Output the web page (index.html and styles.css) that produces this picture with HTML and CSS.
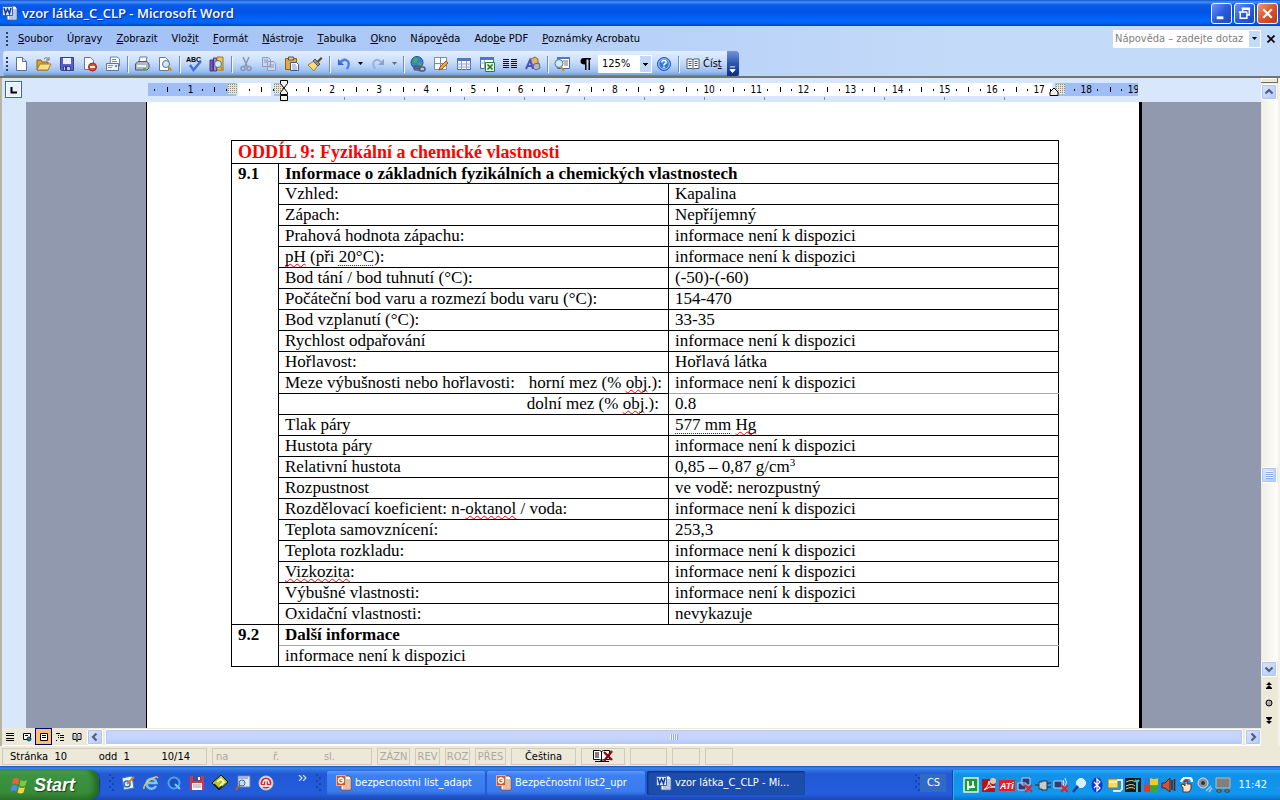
FILE: index.html
```html
<!DOCTYPE html>
<html lang="cs">
<head>
<meta charset="utf-8">
<title>vzor látka_C_CLP - Microsoft Word</title>
<link rel="stylesheet" href="styles.css">
</head>
<body>
<svg class="defs" aria-hidden="true">
  <symbol id="word" viewBox="0 0 16 16"><path d="M5 1h8l2 2v12H5z" fill="#fff" stroke="#3c5a9c"/><path d="M10 5h4M10 7h4M10 9h4M7 11h7M7 13h7" stroke="#6f8fd0"/><path d="M.5 1.500h10v9h-10z" fill="#dce8fc" stroke="#3a62b4"/><path d="M2 3l1.500 5.500L5.500 4l2 4.500L9 3" fill="none" stroke="#123c9c" stroke-width="1.500"/></symbol>
  <symbol id="ppt" viewBox="0 0 16 16"><path d="M5 1h8l2 2v12H5z" fill="#fff" stroke="#8c4a34"/><path d="M10 5h4M10 7h4M10 9h4M7 11h7M7 13h7" stroke="#d07850"/><path d="M.5 .5h9v10h-9z" fill="#d4532a" stroke="#f0b090"/><circle cx="5" cy="5.500" r="2.500" fill="#d4532a" stroke="#fff" stroke-width="1.400"/><path d="M5 2v3.500h3" fill="none" stroke="#fff"/></symbol>
  <symbol id="lens" viewBox="0 0 16 16"><circle cx="9" cy="8" r="3.500" fill="#cfeaf8" stroke="#5d6f80"/><path d="M11.500 11l3 3.500" stroke="#d08a20" stroke-width="2"/></symbol>
  <symbol id="down" viewBox="0 0 5 3"><path d="M0 0h5L2.500 3z"/></symbol>
  <symbol id="grip" viewBox="0 0 6 24"><path d="M1 3h2v2H1zM4 6h2v2H4zM1 9h2v2H1zM4 12h2v2H4zM1 15h2v2H1zM4 18h2v2H4z" fill="#1645a8"/></symbol>
</svg>

<header class="titlebar">
  <svg class="ico"><use href="#word"/></svg>
  <h1>vzor látka_C_CLP - Microsoft Word</h1>
  <div class="winbtns">
    <button aria-label="Minimalizovat"><svg viewBox="0 0 20 20"><path d="M5 13h7v3H5z" fill="#fff"/></svg></button>
    <button aria-label="Obnovit"><svg viewBox="0 0 20 20"><path d="M8 8V5.500h7v6h-2.500M7 4.500h9M4 8.500h9M5.500 9v6h7V9" fill="none" stroke="#fff" stroke-width="1.500"/></svg></button>
    <button class="close" aria-label="Zavřít"><svg viewBox="0 0 20 20"><path d="M5.500 5.500l9 9M14.500 5.500l-9 9" stroke="#fff" stroke-width="2.400"/></svg></button>
  </div>
</header>

<nav class="menubar">
  <i class="dots"></i>
  <button><u>S</u>oubor</button><button>Úpr<u>a</u>vy</button><button><u>Z</u>obrazit</button><button>Vlož<u>i</u>t</button><button><u>F</u>ormát</button><button><u>N</u>ástroje</button><button><u>T</u>abulka</button><button><u>O</u>kno</button><button>Nápo<u>v</u>ěda</button><button>Ado<u>b</u>e PDF</button><button><u>P</u>oznámky Acrobatu</button>
  <div class="ask"><input type="text" aria-label="Nápověda" value="Nápověda – zadejte dotaz"><button aria-label="Seznam dotazů"><svg class="arrow"><use href="#down"/></svg></button></div>
  <button class="closedoc" aria-label="Zavřít okno"><svg viewBox="0 0 8 8"><path d="M.5.5l7 7M7.500.5l-7 7" stroke="#000" stroke-width="1.700"/></svg></button>
</nav>

<div class="toolrow">
 <div class="toolbar">
  <i class="dots"></i>
  <button aria-label="Nový"><svg viewBox="0 0 16 16"><path d="M3.500 1.500h6l4 4v9h-10z" fill="#fff" stroke="#5c6f94"/><path d="M9.500 1.500v4h4" fill="#cdd9f0" stroke="#5c6f94"/></svg></button>
  <button aria-label="Otevřít"><svg viewBox="0 0 16 16"><path d="M1 14V4h4l1 2h6v8z" fill="#d9a23a" stroke="#8c6414"/><path d="M1 14l3-6h11l-3 6z" fill="#ffe08a" stroke="#a87a20"/><path d="M8 3q3-3 5 1m0-3v3h-3" fill="none" stroke="#777"/></svg></button>
  <button aria-label="Uložit"><svg viewBox="0 0 16 16"><path d="M1.500 1.500h13v13h-12l-1-1z" fill="#5a62c8" stroke="#373c94"/><path d="M4 2h8v6H4z" fill="#eef1fb"/><path d="M4.500 10.500h7v4h-7z" fill="#c2c8e4" stroke="#373c94"/><path d="M6 11h2v3H6z" fill="#333a80"/></svg></button>
  <button aria-label="Oprávnění"><svg viewBox="0 0 16 16"><path d="M2.500 1.500h6l3 3v9h-9z" fill="#fff" stroke="#6378a0"/><circle cx="10.500" cy="11" r="4" fill="#e04a2c" stroke="#a3240f"/><path d="M8 11h5" stroke="#fff" stroke-width="1.800"/></svg></button>
  <button aria-label="E-mail"><svg viewBox="0 0 16 16"><path d="M5.500 1h6.500l2.500 2v7H5z" fill="#fff" stroke="#7080a0"/><path d="M7 3.500h4M7 5.500h5" stroke="#b77"/><path d="M1.500 7.500h12v7h-12z" fill="#eef2fb" stroke="#66758f"/><path d="M3 9.500h5M3 11.500h4" stroke="#8392ad"/><path d="M10 9h2v2h-2z" fill="#5f88d0"/></svg></button>
  <i class="sep"></i>
  <button aria-label="Tisk"><svg viewBox="0 0 16 16"><path d="M5 6l1-5h7l-1 5z" fill="#fff" stroke="#6a7894"/><path d="M1.500 8L4 5.500h9L15 8v4l-2 2H1.500z" fill="#aeb8c8" stroke="#4b5668"/><path d="M3 9h9v2H3z" fill="#edf0f6"/><path d="M9 12h3v2H9z" fill="#3cb83c"/></svg></button>
  <button aria-label="Náhled"><svg viewBox="0 0 16 16"><path d="M2.500 1.500h6l3 3v10h-9z" fill="#fff" stroke="#6378a0"/><use href="#lens"/></svg></button>
  <i class="sep"></i>
  <button aria-label="Pravopis"><svg viewBox="0 0 16 16"><text x="0" y="6" class="abc">ABC</text><path d="M4 9l3.500 5L15 5" fill="none" stroke="#3d6fe0" stroke-width="2.400"/></svg></button>
  <button aria-label="Zdroje informací"><svg viewBox="0 0 16 16"><path d="M1 4h3v11H1z" fill="#7858b8" stroke="#4c3585"/><path d="M4.500 2h3v13h-3z" fill="#a589d8" stroke="#4c3585"/><path d="M8 1h6v13H8z" fill="#f0c860" stroke="#9a7820"/><use href="#lens"/></svg></button>
  <i class="sep"></i>
  <button aria-label="Vyjmout" disabled><svg viewBox="0 0 16 16"><path d="M5 1l4.500 10M11 1L6.500 11" stroke="#8698ba" stroke-width="1.500"/><circle cx="5" cy="12.500" r="2" fill="none" stroke="#8698ba" stroke-width="1.500"/><circle cx="11" cy="12.500" r="2" fill="none" stroke="#8698ba" stroke-width="1.500"/></svg></button>
  <button aria-label="Kopírovat" disabled><svg viewBox="0 0 16 16"><g fill="#c9d7f0" stroke="#8c9dbf"><path d="M1.500 1.500h6l2 2v7h-8zM6.500 5.500h6l2 2v7h-8z"/><path d="M3 4h4M3 6h3M8 9h5M8 11h5"/></g></svg></button>
  <button aria-label="Vložit"><svg viewBox="0 0 16 16"><path d="M1.500 2.500h11v11h-11z" fill="#e0aa3e" stroke="#8c6414"/><path d="M4.500 1h5v3h-5z" fill="#ccc" stroke="#555"/><path d="M6.500 6.500h6l2 2v6h-8z" fill="#fff" stroke="#3f5890"/><path d="M8 9h4M8 11h5M8 13h5" stroke="#7990c0"/></svg></button>
  <button aria-label="Kopírovat formát"><svg viewBox="0 0 16 16"><path d="M1 9l6-4 4 4-4 6z" fill="#f4dc7c" stroke="#a38528"/><path d="M6 5l2-2 5 5-2 2z" fill="#8a8f9c" stroke="#555"/><path d="M10 5l4-4 1.500 1.500-4 4z" fill="#5a482c"/></svg></button>
  <i class="sep"></i>
  <button aria-label="Zpět"><svg viewBox="0 0 16 16"><path d="M2 3v6h6z" fill="#2f63d8"/><path d="M4 7q3-4 6-3 5 2 1 9" fill="none" stroke="#4a7ce4" stroke-width="2.400"/></svg></button><button class="thin" aria-label="Seznam zpět"><svg class="arrow"><use href="#down"/></svg></button>
  <button aria-label="Znovu" disabled><svg viewBox="0 0 16 16"><path d="M14 3v6H8z" fill="#8ba0c8"/><path d="M12 7q-3-4-6-3-5 2-1 9" fill="none" stroke="#9bb0d6" stroke-width="2"/></svg></button><button class="thin" disabled aria-label="Seznam znovu"><svg class="arrow"><use href="#down"/></svg></button>
  <i class="sep"></i>
  <button aria-label="Hypertextový odkaz"><svg viewBox="0 0 16 16"><circle cx="7" cy="6.500" r="6" fill="#3b80d8" stroke="#25508f"/><path d="M3 3q3-3 5 0l-1 3-3 1zM8 7l4-1-1 4-2 1z" fill="#45b04a"/><g fill="none" stroke="#4f5a6c" stroke-width="1.500"><rect x="4" y="10" width="6" height="4" rx="2"/><rect x="9" y="11" width="6" height="4" rx="2"/></g></svg></button>
  <button aria-label="Tabulky a ohraničení"><svg viewBox="0 0 16 16"><path d="M1.500 1.500h12v12h-12z" fill="#fff" stroke="#7a8cae"/><path d="M7.500 1v13M1 7.500h13" stroke="#7a8cae"/><path d="M6 14l1-3 6-6 2 2-6 6z" fill="#f2a840" stroke="#8f5a18"/></svg></button>
  <button aria-label="Vložit tabulku"><svg viewBox="0 0 16 16"><path d="M1.500 2.500h13v11h-13z" fill="#fff" stroke="#4668b4"/><path d="M1 2h14v3H1z" fill="#4f76c8"/><path d="M1 8h14M1 11h14M5.500 5v9M10.500 5v9" stroke="#8aa3d4"/></svg></button>
  <button aria-label="Vložit list Excel"><svg viewBox="0 0 16 16"><path d="M1.500 1.500h13v11h-13z" fill="#fff" stroke="#4668b4"/><path d="M1 1h14v3H1z" fill="#4f76c8"/><path d="M1 7h14M5.500 4v9" stroke="#8aa3d4"/><path d="M6.500 6.500h9v9h-9z" fill="#e4f4e0" stroke="#2d7d32"/><path d="M8.500 8.500l5 5M13.500 8.500l-5 5" stroke="#1f7a28" stroke-width="1.600"/></svg></button>
  <button aria-label="Sloupce"><svg viewBox="0 0 16 16"><path d="M1 3.500h6M1 5.500h6M1 7.500h6M1 9.500h6M1 11.500h6M9 3.500h6M9 5.500h6M9 7.500h6M9 9.500h6M9 11.500h6" stroke="#111"/></svg></button>
  <button aria-label="Kreslení"><svg viewBox="0 0 16 16"><path d="M6 3l4-2 3 2v5l-4 1-3-2z" fill="#e0b46c" stroke="#8c6a30"/><path d="M9 8l5-1 1 5-4 2-3-2z" fill="#b0b4c8" stroke="#62667c"/><path d="M1 13l4-9 3 9M2.500 10h4" fill="none" stroke="#4a54c4" stroke-width="2"/></svg></button>
  <i class="sep"></i>
  <button aria-label="Rozložení dokumentu"><svg viewBox="0 0 16 16"><path d="M3.500 1.500h12v11h-12z" fill="#fff" stroke="#4668b4"/><path d="M3 1h13v2H3z" fill="#4f76c8"/><path d="M9 5h5M10 7h4M10 9h4" stroke="#777"/><circle cx="5" cy="7.500" r="4" fill="#cfeaf8" stroke="#5d7080"/><path d="M7 11l3 4" stroke="#d08a20" stroke-width="2"/></svg></button>
  <button aria-label="Zobrazit vše"><svg viewBox="0 0 16 16"><path d="M7 2h7v1.500h-1V14h-1.500V3.500H9.500V14H8V8.500Q3.500 8.500 3.500 5.300T7 2z"/></svg></button>
  <select class="zoom" aria-label="Lupa"><option>125%</option></select>
  <button aria-label="Nápověda"><svg viewBox="0 0 16 16"><circle cx="8" cy="8" r="6.500" fill="#3478e4" stroke="#1f55b4"/><circle cx="8" cy="8" r="5.300" fill="none" stroke="#d6e6ff" stroke-width=".8"/><path d="M5.800 6.500q.2-2 2.200-2t2.200 1.700q0 1-1.200 1.600T8 9.400M8 10.500v1.600" fill="none" stroke="#fff" stroke-width="1.600"/></svg></button>
  <i class="sep"></i>
  <button class="read"><svg viewBox="0 0 16 16"><path d="M2 3h5l1 1 1-1h5v9.500H9l-1 1-1-1H2z" fill="#fff" stroke="#4a5878"/><path d="M8 4v9M3.500 5.500h3M3.500 7.500h3M3.500 9.500h3M9.500 5.500h3M9.500 7.500h3M9.500 9.500h3" stroke="#4a5878"/></svg><span>Čís<u>t</u></span></button>
  <button class="more" aria-label="Možnosti panelu"><svg viewBox="0 0 8 8"><path d="M1 1h6M1 4h6L4 7.500z" fill="#fff" stroke="#fff"/></svg></button>
 </div>
</div>

<main class="work">
 <div class="left">
  <div class="rulerrow">
    <div class="tabcell"><button class="tabsel" aria-label="Tabulátor"><svg viewBox="0 0 8 8"><path d="M1.500 1v5.500H7" fill="none" stroke="#000" stroke-width="2"/></svg></button></div>
    <div class="ruler">
      <div class="scale"><div class="cells"><b>1</b><b></b><b class="hidden"></b><b>2</b><b>3</b><b>4</b><b>5</b><b>6</b><b>7</b><b>8</b><b>9</b><b>10</b><b>11</b><b>12</b><b>13</b><b>14</b><b>15</b><b>16</b><b>17</b><b>18</b><b>19</b></div></div>
      <i class="hatch h1"></i><i class="hatch h2"></i><i class="hatch h3"></i>
      <svg class="indent" viewBox="0 0 10 22"><g fill="#f4f1e4" stroke="#000"><path d="M1.500.5h7v3L5 8 1.500 3.500zM5 8l3.500 4.500v2h-7v-2zM1.500 15.500h7v5h-7z"/></g></svg>
      <svg class="rindent" viewBox="0 0 10 9"><path d="M5 1l4 4v3.500H1V5z" fill="#f4f1e4" stroke="#000"/></svg>
    </div>
  </div>
  <div class="desk">
   <article class="page">
    <table>
     <colgroup><col class="c1"><col class="c2"><col class="c2"></colgroup>
     <tr class="head"><th colspan="3">ODDÍL 9: Fyzikální a chemické vlastnosti</th></tr>
     <tr class="sub"><th rowspan="22">9.1</th><th colspan="2">Informace o základních fyzikálních a chemických vlastnostech</th></tr>
     <tr><td>Vzhled:</td><td>Kapalina</td></tr>
     <tr><td>Zápach:</td><td>Nepříjemný</td></tr>
     <tr><td>Prahová hodnota zápachu:</td><td>informace není k dispozici</td></tr>
     <tr><td><span class="sp">pH</span> (při <span class="tag">20°C</span>):</td><td>informace není k dispozici</td></tr>
     <tr><td>Bod tání / bod tuhnutí (°C):</td><td>(-50)-(-60)</td></tr>
     <tr><td>Počáteční bod varu a rozmezí bodu varu (°C):</td><td>154-470</td></tr>
     <tr><td>Bod vzplanutí (°C):</td><td>33-35</td></tr>
     <tr><td>Rychlost odpařování</td><td>informace není k dispozici</td></tr>
     <tr><td>Hořlavost:</td><td>Hořlavá látka</td></tr>
     <tr><td><div class="split"><span>Meze výbušnosti nebo hořlavosti:</span><span>horní mez (% <span class="sp">obj</span>.):</span></div></td><td class="soft">informace není k dispozici</td></tr>
     <tr><td class="right">dolní mez (% <span class="sp">obj</span>.):</td><td>0.8</td></tr>
     <tr><td>Tlak páry</td><td><span class="tag">577 mm</span> <span class="sp">Hg</span></td></tr>
     <tr><td>Hustota páry</td><td>informace není k dispozici</td></tr>
     <tr><td>Relativní hustota</td><td>0,85 – 0,87 g/cm<sup>3</sup></td></tr>
     <tr><td>Rozpustnost</td><td>ve vodě: nerozpustný</td></tr>
     <tr><td>Rozdělovací koeficient: n-<span class="sp">oktanol</span> / voda:</td><td>informace není k dispozici</td></tr>
     <tr><td>Teplota samovznícení:</td><td>253,3</td></tr>
     <tr><td>Teplota rozkladu:</td><td>informace není k dispozici</td></tr>
     <tr><td><span class="sp">Vizkozita</span>:</td><td>informace není k dispozici</td></tr>
     <tr><td>Výbušné vlastnosti:</td><td>informace není k dispozici</td></tr>
     <tr><td>Oxidační vlastnosti:</td><td>nevykazuje</td></tr>
     <tr><th rowspan="2">9.2</th><th colspan="2" class="soft">Další informace</th></tr>
     <tr><td colspan="2">informace není k dispozici</td></tr>
    </table>
   </article>
  </div>
  <div class="hscroll">
    <div class="views">
      <button aria-label="Normální"><svg viewBox="0 0 10 10"><path d="M1 1.500h8M1 3.500h8M1 6.500h8M1 8.500h8" stroke="#000"/></svg></button>
      <button aria-label="Web"><svg viewBox="0 0 10 10"><path d="M1.500 1.500h7v6h-7zM3 3.500h3" fill="#fff" stroke="#000"/><circle cx="7" cy="7" r="2" fill="#2c8c3c" stroke="#113a8c"/></svg></button>
      <button class="on" aria-label="Rozložení při tisku"><svg viewBox="0 0 10 10"><path d="M1.500 1.500h7v7h-7z" fill="#fff" stroke="#000"/><path d="M3 3.500h4M3 5.500h4" stroke="#000"/></svg></button>
      <button aria-label="Osnova"><svg viewBox="0 0 10 10"><path d="M1 1.500h4M3 3.500h1M5 3.500h4M3 5.500h1M5 5.500h4M1 8.500h1M5 8.500h4" stroke="#000"/></svg></button>
      <button aria-label="Čtení"><svg viewBox="0 0 10 10"><path d="M1 1.500h3l1 1 1-1h3v6H6l-1 1-1-1H1z" fill="#fff" stroke="#000"/><path d="M5 2v8M2.500 4h1M6.500 4h1M2.500 6h1M6.500 6h1" stroke="#000"/></svg></button>
    </div>
    <button class="sbtn" aria-label="Vlevo"><svg viewBox="0 0 10 10"><path d="M6.500 1.500L3 5l3.500 3.500" fill="none" stroke="#4d6185" stroke-width="2.200"/></svg></button>
    <div class="hthumb"><i></i></div>
    <button class="sbtn" aria-label="Vpravo"><svg viewBox="0 0 10 10"><path d="M3.500 1.500L7 5 3.500 8.500" fill="none" stroke="#4d6185" stroke-width="2.200"/></svg></button>
  </div>
 </div>
 <div class="vscroll">
   <i class="splitter"></i>
   <button class="sbtn" aria-label="Nahoru"><svg viewBox="0 0 10 10"><path d="M1.500 6.500L5 3l3.500 3.500" fill="none" stroke="#4d6185" stroke-width="2.200"/></svg></button>
   <i class="track t1"></i>
   <div class="sbtn"><i class="ridges"></i></div>
   <i class="track t2"></i>
   <button class="sbtn" aria-label="Dolů"><svg viewBox="0 0 10 10"><path d="M1.500 3.500L5 7l3.500-3.500" fill="none" stroke="#4d6185" stroke-width="2.200"/></svg></button>
   <div class="browse">
    <button aria-label="Předchozí"><svg viewBox="0 0 8 8"><path d="M4 0l3 3H1zM4 3l3 3H1zM1 6h6v1H1z"/></svg></button>
    <button aria-label="Vybrat objekt"><svg viewBox="0 0 8 8"><circle cx="4" cy="4" r="3" fill="#aaa" stroke="#000"/><path d="M2.500 3.500l1-1" stroke="#fff"/></svg></button>
    <button aria-label="Další"><svg viewBox="0 0 8 8"><path d="M4 8l3-3H1zM4 5l3-3H1zM1 1h6v1H1z"/></svg></button>
   </div>
 </div>
</main>

<footer class="status">
  <div class="p pos"><span>Stránka&nbsp; 10</span><span>odd&nbsp; 1</span><span>10/14</span></div>
  <div class="p cur"><span>na</span><span>ř.</span><span>sl.</span></div>
  <div class="p m1">ZÁZN</div><div class="p m2">REV</div><div class="p m2">ROZ</div><div class="p m3">PŘES</div>
  <div class="p lang">Čeština</div>
  <div class="p book"><svg viewBox="0 0 22 14"><path d="M1.500 1.500h6l2 1 2-1h6v9h-6l-2 1-2-1h-6z" fill="#fff" stroke="#000"/><path d="M9.500 2v10M3 12.500h14M3 4h4M3 6h4M3 8h4" stroke="#000"/><path d="M12 3l8 8M20 2l-8 10" stroke="#8c0c14" stroke-width="2.400"/></svg></div>
  <div class="p e1"></div><div class="p e2"></div><div class="p e2"></div>
</footer>

<div class="taskbar">
  <button class="start"><svg viewBox="0 0 20 20"><path d="M3 4q3-2 6 0L8 9.500q-3-2-6 0z" fill="#f0603a"/><path d="M10.500 5q3 2 6.500 0l-1.500 5.500q-3 2-6 0z" fill="#7cc843"/><path d="M1.500 11q3-2 6 0l-1 5.500q-3-2-6 0z" fill="#4a8cf0"/><path d="M9 12q3 2 6 0l-1.500 5.500q-3 2-6 0z" fill="#fcd23c"/></svg><span>Start</span></button>
  <svg class="grip"><use href="#grip"/></svg>
  <div class="quick">
    <button aria-label="Plocha"><svg viewBox="0 0 16 16"><path d="M2 3l10-2 2 12-10 2z" fill="#e8f4ff" stroke="#3a74c0"/><circle cx="7" cy="9" r="3" fill="none" stroke="#2870c8" stroke-width="1.500"/><path d="M7 9l7-7" stroke="#d87828" stroke-width="2"/></svg></button>
    <button aria-label="Internet Explorer"><svg viewBox="0 0 16 16"><path d="M13 11a5 5 0 1 1 .5-3H5" fill="none" stroke="#7cc8fc" stroke-width="2.400"/><path d="M1 14q-1-4 6-9t8-2" fill="none" stroke="#f8c840" stroke-width="1.400"/></svg></button>
    <button aria-label="QuickTime"><svg viewBox="0 0 16 16"><circle cx="8" cy="8" r="5.500" fill="#1a50b8" stroke="#48a4f0" stroke-width="2"/><path d="M9 9l5 5" stroke="#7cc8fc" stroke-width="2"/></svg></button>
    <button aria-label="Disketa"><svg viewBox="0 0 16 16"><path d="M1 1h14v14H1z" fill="#d8363c"/><path d="M4 1h8v5H4z" fill="#3c50a0"/><path d="M9 2h2v3H9z" fill="#fff"/><path d="M3 8h10v7H3z" fill="#fff"/><path d="M4 10h8M4 12h8" stroke="#999"/></svg></button>
    <button aria-label="Karta"><svg viewBox="0 0 16 16"><path d="M9 0l7 7-9 8-7-7z" fill="#b8cc20" stroke="#111"/><path d="M5 7l4-3 3 3-4 4" fill="none" stroke="#fff" stroke-width="1.500"/><path d="M2 9l5 5 3-3" fill="none" stroke="#222" stroke-width="1.500"/></svg></button>
    <button aria-label="Hledat"><svg viewBox="0 0 16 16"><path d="M3 1h12v11H3z" fill="#dfe8f4" stroke="#6a80a8"/><path d="M4 3h9" stroke="#58c"/><circle cx="7" cy="8" r="3" fill="#b4e0fa" stroke="#4c6c90"/><path d="M5 10l-4 5" stroke="#b46420" stroke-width="2"/></svg></button>
    <button aria-label="Klient"><svg viewBox="0 0 16 16"><circle cx="8" cy="8" r="7" fill="#e4e4e8" stroke="#c8c8d0"/><circle cx="8" cy="8" r="5.500" fill="#d42c34"/><path d="M3 11h10M5 9q0-4 3-4t3 4M8 4v8" fill="none" stroke="#fff" stroke-width="1.400"/></svg></button>
  </div>
  <button class="chev" aria-label="Další ikony"><svg viewBox="0 0 10 6"><path d="M1 0l3 3-3 3M5 0l3 3-3 3" fill="none" stroke="#cfe2ff" stroke-width="1.200"/></svg></button>
  <svg class="grip"><use href="#grip"/></svg>
  <div class="tasks">
    <button><svg class="ico"><use href="#ppt"/></svg><span>bezpecnostni list_adapt</span></button>
    <button><svg class="ico"><use href="#ppt"/></svg><span>Bezpečnostní list2_upr</span></button>
    <button class="active"><svg class="ico"><use href="#word"/></svg><span>vzor látka_C_CLP - Mi...</span></button>
  </div>
  <svg class="grip"><use href="#grip"/></svg>
  <button class="cs">CS</button>
  <div class="tray">
    <svg viewBox="0 0 16 16"><path d="M1 1h14v14H1z" fill="#169c3c" stroke="#e8f0e8" stroke-width="1.500"/><path d="M5 4v9M5 9q3 3 5-1V4v6h2" fill="none" stroke="#fff" stroke-width="1.800"/></svg>
    <svg viewBox="0 0 16 16"><path d="M1 2h13v13H1z" fill="#b81418"/><path d="M3 13q5-4 5-9 0 6 6 6-6-1-11 3z" fill="none" stroke="#fff"/><circle cx="12" cy="4" r="3" fill="#e8c8a0"/></svg>
    <svg viewBox="0 0 16 16"><path d="M0 3h16v11H0z" fill="#ec1c24"/><text x="1" y="12" class="ati">ATi</text></svg>
    <svg viewBox="0 0 16 16"><path d="M5 1h8v7H5zM1 6h8v7H1z" fill="#24407c" stroke="#c8d0e0"/><path d="M8 8l7 7M15 8l-7 7" stroke="#e4202c" stroke-width="2"/></svg>
    <svg viewBox="0 0 16 16"><path d="M0 8h4M12 6h4M12 10h4" stroke="#222"/><path d="M4 5h3V4h5v9H7v-1H4z" fill="#c8ccd0" stroke="#333"/></svg>
    <svg viewBox="0 0 16 16"><path d="M1 4h8v7H1z" fill="#24407c" stroke="#c8d0e0"/><path d="M10 3q2 3 0 6M12 1q3 5 0 9" fill="none" stroke="#e8eef8"/><path d="M8 8l7 7M15 8l-7 7" stroke="#e4202c" stroke-width="2"/></svg>
    <svg viewBox="0 0 16 16"><circle cx="10" cy="6" r="4.500" fill="#d8f0fc" stroke="#f4faff"/><path d="M7 9l-5 6" stroke="#223a88" stroke-width="2.400"/></svg>
    <svg viewBox="0 0 16 16"><ellipse cx="8" cy="8" rx="5.500" ry="7.500" fill="#0c34d0"/><path d="M5 5l6 6-3 3V2l3 3-6 6" fill="none" stroke="#fff" stroke-width="1.200"/></svg>
    <svg viewBox="0 0 16 16"><path d="M1 2h10v9H1z" fill="#f4dc60" stroke="#98781c"/><path d="M10 3h5v9l-2 2H6" fill="none" stroke="#d8ecfc" stroke-width="2"/><path d="M2 5h8" stroke="#fff"/></svg>
    <svg viewBox="0 0 16 16"><path d="M0 1h16v14H0z" fill="#161a1c"/><path d="M1 5q6-3 9 0M1 9q6-3 9 0M1 12q6-3 9 0" fill="none" stroke="#d8d4a0"/><path d="M12 3v12M10 3l2 2 2-2" fill="none" stroke="#3cc0d0" stroke-width="2"/></svg>
    <svg viewBox="0 0 16 16"><path d="M2 1q3-1 5 1v6q-3-1-6 0z" fill="#3078e0"/><path d="M7 1q4 2 8 0v7q-4 1-8 0z" fill="#f4c828"/><path d="M1 8q3-1 6 0v7q-3-1-6 0z" fill="#e4382c"/><path d="M7 8q4 1 8 0v7q-4 1-8 0z" fill="#38a838"/></svg>
    <svg viewBox="0 0 16 16"><path d="M1 6h3l5-5v14l-5-4H1z" fill="#c85838" stroke="#5c1c10"/><path d="M11 3v10M13.500 2v12" stroke="#5c1c10" stroke-width="1.500"/></svg>
    <svg viewBox="0 0 16 16"><path d="M4 15v-4L2 8l2-1 2 2V3h2v4h4v5l-2 3z" fill="#fbe4c8" stroke="#5c3420"/><path d="M2 5q2-5 6-4 5-1 5 4" fill="none" stroke="#fff" stroke-width="2.400"/><path d="M7 2v3" stroke="#c22" stroke-width="2"/></svg>
    <svg viewBox="0 0 16 16"><circle cx="6" cy="6" r="5" fill="#8c929a" stroke="#d8dce0"/><circle cx="6" cy="6" r="2" fill="#333"/><path d="M9 14l5-5M12 15l3-4" stroke="#a8c8f8" stroke-width="1.500"/></svg>
    <svg viewBox="0 0 16 16"><path d="M1 1h14v10H1z" fill="#808080" stroke="#bcb8a8"/><path d="M2 13h4v2H2zM10 13h4v2h-4z" fill="#aaa" stroke="#333"/></svg>
    <time>11:42</time>
  </div>
</div>
</body>
</html>
```
FILE: styles.css
```css
* { box-sizing: border-box; }
body {
  margin: 0;
  height: 100vh;
  display: flex;
  flex-direction: column;
  overflow: hidden;
  background: #ece9d8;
  color: #000;
  font: 11px/14px "DejaVu Sans Condensed", "Noto Sans", sans-serif;
}
button {
  font: inherit;
  color: inherit;
  border: 0;
  padding: 0;
  margin: 0;
  background: none;
  display: flex;
  align-items: center;
  justify-content: center;
}
svg { flex: none; display: block; width: 16px; height: 16px; }
.defs { position: absolute; width: 0; height: 0; }
.arrow { width: 5px; height: 3px; }
.abc { font: bold 7px "Liberation Sans", sans-serif; }
.ati { font: italic bold 9px "Liberation Sans", sans-serif; fill: #fff; }

/* Title bar */
.titlebar {
  height: 26px;
  display: flex;
  align-items: center;
  padding: 0 2px;
  gap: 4px;
  background: linear-gradient(#1c50c8, #3c94fc 2px, #0a5ae8 5px, #0054e4 12px, #0066fc 20px, #0062f4 23px, #0040c0);
}
.titlebar h1 {
  flex: 1;
  margin: 0;
  font: 600 13px/18px "Open Sans", sans-serif;
  color: #fff;
  text-shadow: 1px 1px #0a2c90;
}
.winbtns { display: flex; gap: 2px; }
.winbtns button {
  width: 21px;
  height: 21px;
  border: 1px solid #fff;
  border-radius: 3px;
  background: linear-gradient(135deg, #6c94f4, #2a5ce0 50%, #1c48c4);
}
.winbtns svg { width: 19px; height: 19px; }
.winbtns .close { background: linear-gradient(135deg, #f09878, #e0502c 50%, #c03a14); }

/* Menu */
.menubar {
  height: 25px;
  display: flex;
  align-items: center;
  padding: 0 5px;
  background: linear-gradient(90deg, #9ebef5, #c4daf9 75%);
}
.menubar > button { padding: 0 7px; height: 20px; white-space: pre; }
.dots {
  width: 2px;
  height: 14px;
  margin: 0 1px;
  background: repeating-linear-gradient(#27416d 0 2px, transparent 2px 4px);
}
.menubar .dots { margin-right: 3px; }
.ask { display: flex; margin-left: auto; height: 18px; width: 148px; background: #fff; padding: 1px; }
.ask input {
  flex: 1;
  min-width: 0;
  border: 0;
  padding: 0 1px;
  font: inherit;
  color: #808080;
  background: none;
}
.ask button { width: 11px; background: #c4daf9; }
.menubar .closedoc { padding: 0; margin-left: 6px; }
.closedoc svg { width: 8px; height: 8px; }

/* Toolbar */
.toolrow {
  height: 27px;
  padding-left: 3px;
  background: linear-gradient(90deg, #9ebef5, #c4daf9 75%);
  border-bottom: 2px solid #76746a;
}
.toolbar {
  width: max-content;
  height: 25px;
  display: flex;
  align-items: center;
  padding-left: 2px;
  border-radius: 3px 0 0 3px;
  background: linear-gradient(#e3efff, #c8dcfa 45%, #a0c0f0 80%, #7ba2e4 95%, #4a70b8);
}
.toolbar button { width: 23px; height: 22px; }
.toolbar .thin { width: 11px; }
.thin:disabled { opacity: .5; }
.sep { width: 1px; height: 16px; margin: 0 2px 0 3px; background: #6a8ccb; box-shadow: 1px 1px #f1f9ff; }
.zoom {
  appearance: none;
  width: 54px;
  height: 18px;
  margin: 0 0 0 2px;
  padding: 0 3px;
  border: 1px solid #fff;
  border-radius: 0;
  font: inherit;
  color: #000;
  background:
    linear-gradient(#000, #000) right 3px top 7px / 5px 1px no-repeat,
    linear-gradient(#000, #000) right 4px top 8px / 3px 1px no-repeat,
    linear-gradient(#000, #000) right 5px top 9px / 1px 1px no-repeat,
    linear-gradient(#c0d8f8, #c0d8f8) right / 11px 100% no-repeat,
    #fff;
}
.toolbar .read { width: auto; padding: 0 5px 0 4px; gap: 2px; }
.toolbar .more {
  width: 12px;
  height: 25px;
  align-items: flex-end;
  padding-bottom: 3px;
  border-radius: 0 3px 3px 0;
  background: linear-gradient(#7494d8, #2c56ac 50%, #0c2c84);
}
.more svg { width: 7px; height: 7px; }

/* Work area */
.work { flex: 1; min-height: 0; display: flex; border-left: 2px solid #b8b4a4; }
.left { flex: 1; min-width: 0; display: flex; flex-direction: column; }
.rulerrow { height: 24px; display: flex; background: #d8e7fc; padding-right: 123px; }
.tabcell { width: 146px; padding: 3px; }
.tabsel { width: 17px; height: 17px; border: 1px solid #3c64b0; background: #e8f0fd; box-shadow: inset 0 0 0 1px #fff; }
.tabsel svg { width: 8px; height: 8px; }
.ruler { flex: 1; position: relative; padding-top: 5px; }
.ruler::after {
  content: "";
  display: block;
  height: 3px;
  margin: 1px 80px 0 196px;
  background: linear-gradient(90deg, #888 1px, transparent 1px) 0 0 / 60px 3px repeat-x;
}
.scale {
  height: 13px;
  overflow: hidden;
  background:
    linear-gradient(#000, #000) 6px 6px / 1px 2px no-repeat,
    linear-gradient(#d8e7fc, #d8e7fc) 88px 0 / 2px 100% no-repeat,
    linear-gradient(#d8e7fc, #d8e7fc) 123px 0 / 3px 100% no-repeat,
    linear-gradient(#9ebef5, #9ebef5) 0 0 / 88px 100% no-repeat,
    linear-gradient(#9ebef5, #9ebef5) 126px 0 / 8px 100% no-repeat,
    linear-gradient(#d8e7fc, #d8e7fc) right 83px top 0 / 3px 100% no-repeat,
    linear-gradient(#9ebef5, #9ebef5) right / 83px 100% no-repeat,
    #fff;
}
.cells { display: flex; width: 100%; margin-left: 19px; }
.cells b {
  flex: 1;
  height: 13px;
  font-weight: normal;
  line-height: 13px;
  font-size: 10px;
  text-align: center;
  background:
    linear-gradient(#000, #000) left 4px / 1px 5px no-repeat,
    linear-gradient(#000, #000) 25% 6px / 1px 2px no-repeat,
    linear-gradient(#000, #000) 75% 6px / 1px 2px no-repeat;
}
.hatch {
  position: absolute;
  top: 6px;
  width: 9px;
  height: 10px;
  background:
    repeating-linear-gradient(transparent 0 1px, #e8e4d8 1px 2px),
    repeating-linear-gradient(90deg, #8c887c 0 1px, #e8e4d8 1px 2px);
}
.h1 { left: 80px; }
.h2 { left: 126px; }
.h3 { right: 73px; }
.indent { position: absolute; left: 131px; top: 2px; width: 10px; height: 22px; }
.rindent { position: absolute; right: 79px; top: 9px; width: 10px; height: 9px; }

.desk {
  flex: 1;
  min-height: 0;
  overflow: hidden;
  display: flex;
  padding: 0 119px 0 120px;
  background: #9099ae;
  border-left: 24px solid #d8e7fc;
}
.page {
  flex: 1;
  min-height: 100%;
  background: #fff;
  border-left: 1px solid #000;
  border-right: 3px solid #000;
  padding: 38px 80px 0 84px;
}
table {
  width: 100%;
  table-layout: fixed;
  border-collapse: collapse;
  font: 17px/20px "Liberation Serif", serif;
}
.c1 { width: 47px; }
th, td { height: 21px; padding: 0 6px; border: 1px solid #000; text-align: left; vertical-align: top; white-space: nowrap; }
.head th { height: 23px; line-height: 22px; padding-top: 1px; padding-bottom: 0; line-height: 21px; font-size: 18px; color: #f00; }
.sub th { height: 20px; line-height: 19px; }
.soft { border-bottom-color: #a8a8a8; }
tr:has(.soft) + tr td:last-child { border-top-color: #a8a8a8; }
.split { display: flex; justify-content: space-between; }
.right { text-align: right; padding-right: 9px; }
.sp { text-decoration: underline wavy #f00 1px; text-underline-offset: 1px; text-decoration-skip-ink: none; }
.tag { text-decoration: underline dotted #a000c0 1px; text-underline-offset: 3px; text-decoration-skip-ink: none; }
sup { font-size: 11px; line-height: 0; vertical-align: 6px; }

/* Scroll bars */
.hscroll { height: 18px; display: flex; align-items: center; gap: 2px; background: #ece9d8; border-bottom: 1px solid #fff; }
.views { display: flex; width: 83px; }
.views button { width: 17px; height: 17px; }
.views svg { width: 10px; height: 10px; }
.views .on { background: #fcc070; border: 1px solid #00007c; }
.sbtn {
  flex: none;
  display: flex;
  align-items: center;
  justify-content: center;
  width: 16px;
  height: 16px;
  border: 1px solid #fff;
  border-radius: 2px;
  background: linear-gradient(135deg, #dce6fe, #b4c8f8);
  box-shadow: inset 0 0 0 1px #b0c4f0;
}
.sbtn svg { width: 10px; height: 10px; }
.hthumb {
  flex: 1;
  height: 16px;
  display: flex;
  align-items: center;
  justify-content: center;
  border: 1px solid #fff;
  border-radius: 2px;
  background: linear-gradient(#c8d6fb, #c4d4fc 60%, #b4c8f4);
  box-shadow: inset 0 0 0 1px #b8caf4;
}
.hthumb i { width: 8px; height: 6px; background: repeating-linear-gradient(90deg, #eef4fe 0 1px, #8caaf0 1px 2px); }
.ridges { width: 7px; height: 8px; background: repeating-linear-gradient(#eef4fe 0 1px, #8caaf0 1px 2px); }
.vscroll {
  width: 19px;
  display: flex;
  flex-direction: column;
  background: #ece9d8;
  border-right: 2px solid #f4f2e8;
}
.splitter { height: 5px; border: 1px solid #716f64; border-width: 0 1px 1px 0; box-shadow: inset 1px 1px #fff; margin-bottom: 1px; }
.track { background: linear-gradient(90deg, #f0eee4, #fefefb); }
.t1 { flex: 367; }
.t2 { flex: 178; }
.browse { height: 69px; display: flex; flex-direction: column; }
.browse button { height: 17px; width: 16px; }
.browse svg { width: 8px; height: 8px; }

/* Status bar */
.status { height: 20px; display: flex; gap: 5px; padding: 2px 2px 0 2px; background: #ece9d8; }
.p { border: 1px solid #d0ccbc; height: 17px; line-height: 15px; text-align: center; color: #aca899; }
.pos { display: flex; width: 205px; padding: 0 16px 0 7px; justify-content: space-between; color: #000; }
.cur { display: flex; width: 160px; padding: 0 36px 0 3px; justify-content: space-between; }
.m1 { width: 33px; }
.m2 { width: 25px; }
.m3 { width: 31px; }
.lang { width: 65px; color: #000; }
.book { width: 44px; display: flex; justify-content: center; }
.book svg { width: 22px; height: 14px; }
.e1 { width: 37px; }
.e2 { width: 28px; }

/* Taskbar */
.taskbar {
  height: 34px;
  display: flex;
  align-items: center;
  color: #fff;
  background: linear-gradient(#1c50b4, #3c84ec 2px, #2c6ce0 5px, #2258d4 8px, #245cdc 28px, #1c48b0);
}
.start {
  align-self: stretch;
  width: 99px;
  margin-top: 4px;
  justify-content: flex-start;
  gap: 4px;
  padding-left: 10px;
  border-radius: 0 10px 10px 0;
  background: linear-gradient(#5cac5c, #3c9440 5px, #388c38 22px, #2c742c);
  box-shadow: inset -5px 0 5px #226c24, 1px 0 1px #14388c;
  font: italic bold 18px/22px "Liberation Sans", sans-serif;
  text-shadow: 1px 1px 1px #1c3c1c;
}
.start svg { width: 20px; height: 20px; }
.grip { width: 6px; height: 24px; }
.start + .grip { margin-left: 9px; }
.quick { display: flex; margin-left: 2px; }
.quick button { width: 23px; height: 24px; }
.chev { width: 38px; height: 24px; padding: 4px 0 0 14px; align-items: flex-start; }
.chev svg { width: 10px; height: 6px; }
.tasks { flex: 1; display: flex; gap: 2px; padding-left: 6px; }
.tasks button {
  flex: 0 1 158px;
  height: 24px;
  justify-content: flex-start;
  gap: 3px;
  padding: 0 9px;
  border-radius: 2px;
  white-space: nowrap;
  background: linear-gradient(#5c9cfc, #3c80f4 4px, #3a7cf0 20px, #2c64d4);
}
.tasks .active { background: #1c4cac; box-shadow: inset 1px 1px 2px #0c2c78; }
.cs { width: 26px; height: 18px; background: #316ac5; margin: 0 6px 0 0; }
.tray {
  align-self: stretch;
  margin-top: 4px;
  display: flex;
  align-items: center;
  gap: 2px;
  padding: 0 13px 0 10px;
  border-left: 1px solid #1044a0;
  box-shadow: inset 1px 0 #1cb8fc;
  background: linear-gradient(#1cb0f8, #1290e8 5px, #1098f0 24px, #0c70c8);
}
.tray time { margin-left: 5px; }
```
